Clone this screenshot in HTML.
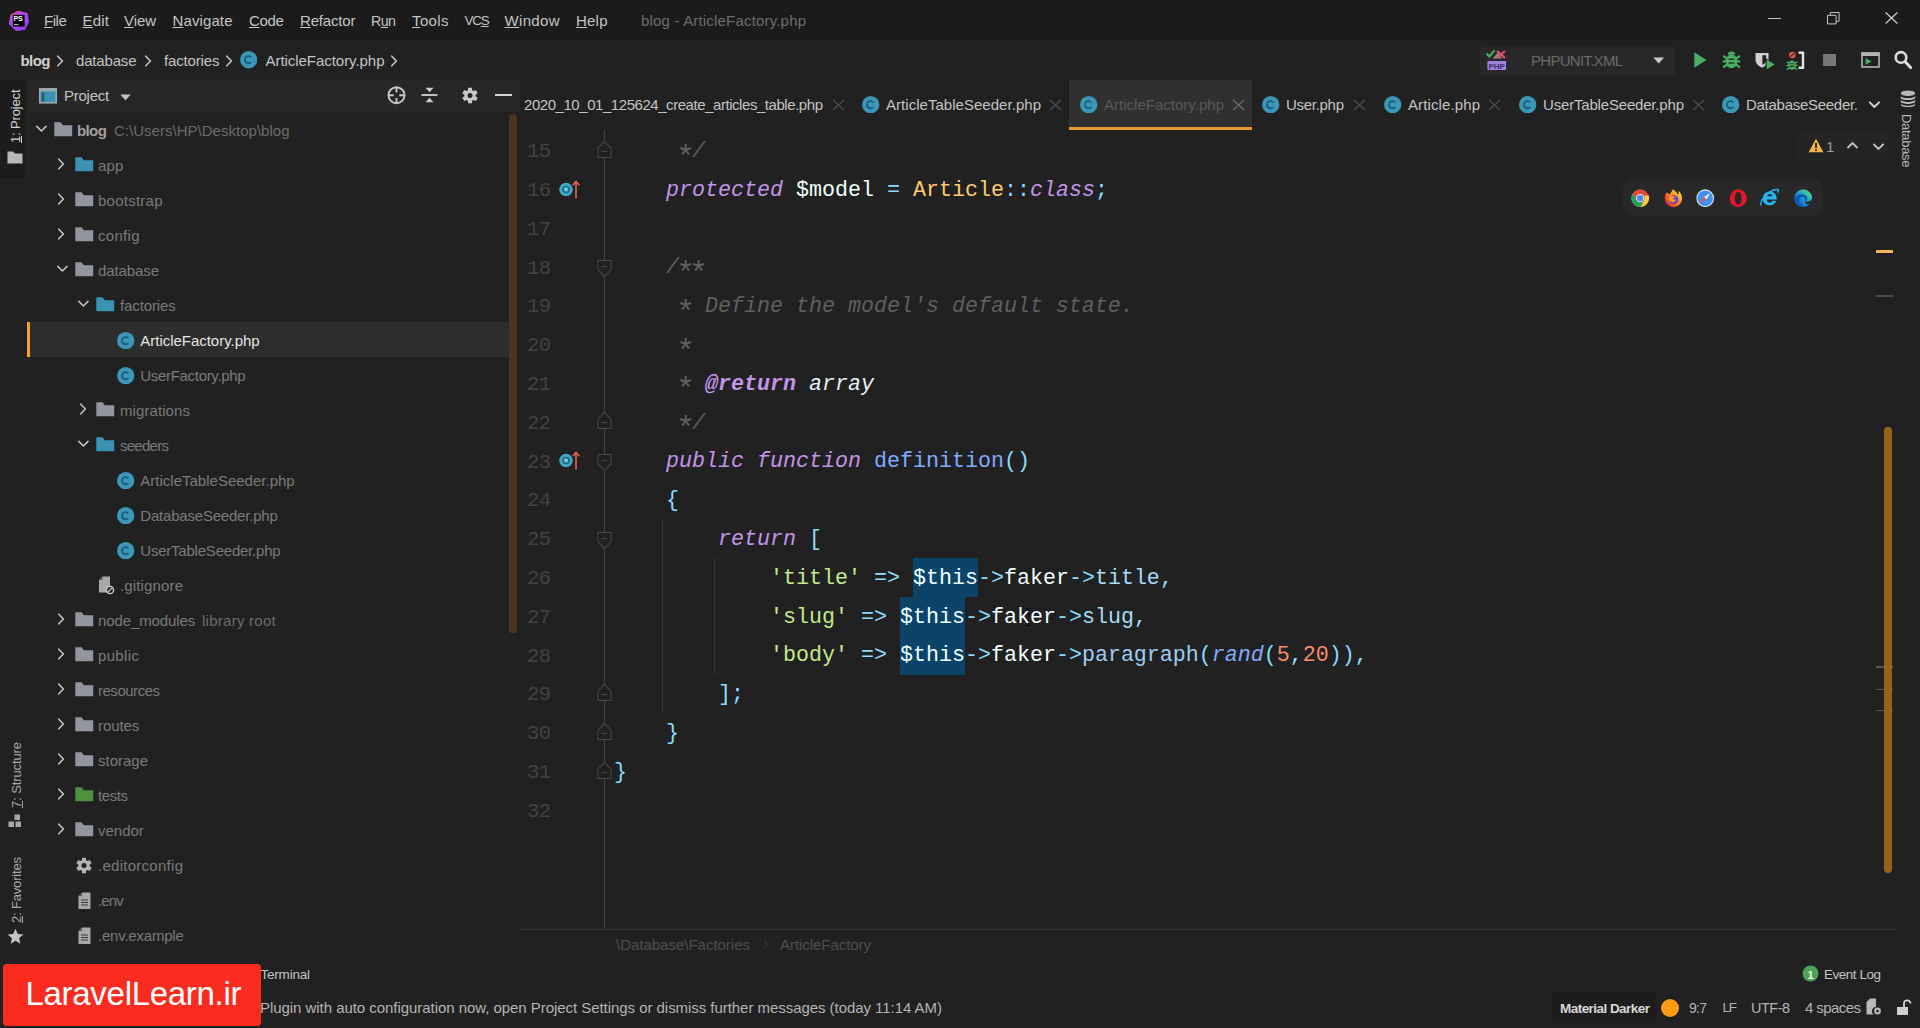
<!DOCTYPE html>
<html lang="en"><head><meta charset="utf-8"><title>blog - ArticleFactory.php</title>
<style>
html,body{margin:0;padding:0;background:#212121;}
body{width:1920px;height:1028px;overflow:hidden;position:relative;font-family:"Liberation Sans", sans-serif;}
.t{position:absolute;white-space:pre;line-height:20px;height:20px;}
.r{position:absolute;display:block;}
.m{font-family:"Liberation Mono", monospace;}
.a{display:inline-block;width:13px;font-size:32px;line-height:0;position:relative;top:9.6px;left:-3.1px;font-style:normal;}
u{text-decoration:underline;text-underline-offset:1.2px;text-decoration-thickness:1.4px;}
</style></head>
<body>
<div class="r" style="left:0.00px;top:0.00px;width:1920.00px;height:40.00px;background:#1b1b1b;"></div>
<svg class="r" style="left:7.50px;top:10.00px;" width="22" height="22" viewBox="0 0 22 22">
<defs><linearGradient id="lg1" x1="0.2" y1="0" x2="0.8" y2="1"><stop offset="0" stop-color="#e8408c"/><stop offset="0.3" stop-color="#b84af0"/><stop offset="1" stop-color="#8a3df2"/></linearGradient></defs>
<path d="M2.500 4.500L10 0.800L19.500 3L21 12L17 20L8 21L0.800 14Z" fill="url(#lg1)"/>
<rect x="4.800" y="4.800" width="11.800" height="11.800" fill="#060606"/>
<text x="5.400" y="11.400" font-family="Liberation Sans, sans-serif" font-weight="700" font-size="7.200" fill="#ffffff" textLength="9.400" lengthAdjust="spacingAndGlyphs">PS</text>
<rect x="6" y="14.200" width="4.600" height="0.900" fill="#d8d8d8"/>
</svg>
<span class="t" style="left:44.00px;top:10.50px;font-size:15.00px;color:#c4c4c4;letter-spacing:-0.462px;"><u>F</u>ile</span>
<span class="t" style="left:82.50px;top:10.50px;font-size:15.00px;color:#c4c4c4;letter-spacing:0.214px;"><u>E</u>dit</span>
<span class="t" style="left:124.00px;top:10.50px;font-size:15.00px;color:#c4c4c4;letter-spacing:-0.083px;"><u>V</u>iew</span>
<span class="t" style="left:172.50px;top:10.50px;font-size:15.00px;color:#c4c4c4;letter-spacing:0.112px;"><u>N</u>avigate</span>
<span class="t" style="left:249.00px;top:10.50px;font-size:15.00px;color:#c4c4c4;letter-spacing:-0.358px;"><u>C</u>ode</span>
<span class="t" style="left:300.00px;top:10.50px;font-size:15.00px;color:#c4c4c4;letter-spacing:-0.172px;"><u>R</u>efactor</span>
<span class="t" style="left:371.00px;top:10.78px;font-size:14.20px;color:#c4c4c4;letter-spacing:-0.516px;">R<u>u</u>n</span>
<span class="t" style="left:412.00px;top:10.50px;font-size:15.00px;color:#c4c4c4;letter-spacing:0.367px;"><u>T</u>ools</span>
<span class="t" style="left:464.50px;top:11.06px;font-size:13.40px;color:#c4c4c4;letter-spacing:-1.123px;">VC<u>S</u></span>
<span class="t" style="left:504.50px;top:10.50px;font-size:15.00px;color:#c4c4c4;letter-spacing:0.325px;"><u>W</u>indow</span>
<span class="t" style="left:576.00px;top:10.50px;font-size:15.00px;color:#c4c4c4;letter-spacing:0.208px;"><u>H</u>elp</span>
<span class="t" style="left:641.00px;top:10.50px;font-size:15.00px;color:#6c6c6c;letter-spacing:0.182px;">blog - ArticleFactory.php</span>
<div class="r" style="left:1768.00px;top:18.20px;width:13.00px;height:1.20px;background:#c4c4c4;"></div>
<svg class="r" style="left:1826.50px;top:11.50px;" width="13" height="13" viewBox="0 0 13 13"><path d="M0.5 3.300h8.600v8.600h-8.600z M3.300 3.300v-2.800h8.800v8.800h-3" fill="none" stroke="#c4c4c4" stroke-width="1"/></svg>
<svg class="r" style="left:1884.50px;top:12.00px;" width="13" height="12" viewBox="0 0 13 12"><path d="M0.600 0.500L12.400 11.500M12.400 0.500L0.600 11.500" fill="none" stroke="#d0d0d0" stroke-width="1.200"/></svg>
<span class="t" style="left:20.50px;top:50.60px;font-size:15.00px;color:#d0d0d0;letter-spacing:-0.552px;font-weight:700;">blog</span>
<svg class="r" style="left:56.00px;top:53.80px;" width="9" height="14" viewBox="0 0 9 14"><path d="M1.8 2.2L6.4 7L1.8 11.8" fill="none" stroke="#c4c4c4" stroke-width="1.6" stroke-linecap="round" stroke-linejoin="round"/></svg>
<span class="t" style="left:76.00px;top:50.60px;font-size:15.00px;color:#c4c4c4;letter-spacing:-0.176px;">database</span>
<svg class="r" style="left:143.50px;top:53.80px;" width="9" height="14" viewBox="0 0 9 14"><path d="M1.8 2.2L6.4 7L1.8 11.8" fill="none" stroke="#c4c4c4" stroke-width="1.6" stroke-linecap="round" stroke-linejoin="round"/></svg>
<span class="t" style="left:164.00px;top:50.60px;font-size:15.00px;color:#c4c4c4;letter-spacing:-0.150px;">factories</span>
<svg class="r" style="left:225.00px;top:53.80px;" width="9" height="14" viewBox="0 0 9 14"><path d="M1.8 2.2L6.4 7L1.8 11.8" fill="none" stroke="#c4c4c4" stroke-width="1.6" stroke-linecap="round" stroke-linejoin="round"/></svg>
<svg class="r" style="left:239.80px;top:51.30px;" width="17.4" height="17.4" viewBox="0 0 17.4 17.4"><circle cx="8.7" cy="8.7" r="8.7" fill="#3b97b8"/><path d="M11.3 6.4 a3.6 3.6 0 1 0 0 4.6" fill="none" stroke="#1f5c78" stroke-width="1.900"/></svg>
<span class="t" style="left:265.50px;top:50.60px;font-size:15.00px;color:#c4c4c4;letter-spacing:-0.045px;">ArticleFactory.php</span>
<svg class="r" style="left:390.00px;top:53.80px;" width="9" height="14" viewBox="0 0 9 14"><path d="M1.8 2.2L6.4 7L1.8 11.8" fill="none" stroke="#c4c4c4" stroke-width="1.6" stroke-linecap="round" stroke-linejoin="round"/></svg>
<div class="r" style="left:1480.00px;top:47.00px;width:195.00px;height:28.00px;background:#282828;border-radius:2px;"></div>
<svg class="r" style="left:1485.00px;top:49.00px;" width="23" height="22" viewBox="0 0 23 22">
<path d="M7.5 9.5L13 3.5L17 9.5z" fill="#8a8a92"/>
<path d="M1.6 4.6l2.8 2.8l5-6" fill="none" stroke="#4bae61" stroke-width="2.2"/>
<path d="M12 2l8 7M20 2l-8 7" fill="none" stroke="#e0506e" stroke-width="2.2"/>
<rect x="2.4" y="12" width="18.6" height="9" rx="1" fill="#9f83dc"/>
<text x="3.4" y="19.7" font-family="Liberation Sans, sans-serif" font-weight="700" font-size="8" fill="#3a2a78">PHP</text>
</svg>
<span class="t" style="left:1531.00px;top:50.60px;font-size:15.00px;color:#6a6a6a;letter-spacing:-0.719px;">PHPUNIT.XML</span>
<svg class="r" style="left:1653.00px;top:57.00px;" width="12" height="8" viewBox="0 0 12 8"><path d="M0.3 0.4h10.8L5.7 6.6z" fill="#c8c8c8"/></svg>
<svg class="r" style="left:1694.00px;top:51.50px;" width="13" height="16" viewBox="0 0 13 16"><path d="M0.3 0.2L12.5 8L0.3 15.8z" fill="#4bae61"/></svg>
<svg class="r" style="left:1721.50px;top:50.00px;" width="19" height="19" viewBox="0 0 19 19">
<g fill="#4bae61" stroke="#4bae61">
<ellipse cx="9.5" cy="11.2" rx="5.7" ry="7" stroke="none"/>
<path d="M5.6 4.4a4 3.6 0 0 1 7.8 0z" stroke="none"/>
<path d="M1.2 6l4 2.6M17.8 6l-4 2.6M0.8 11.4h4.4M18.2 11.4h-4.4M1.2 17.4l4-3M17.8 17.4l-4-3" stroke-width="2.2" fill="none"/>
</g>
<path d="M6.6 9.3h5.8M6.6 13h5.8" stroke="#1f3a26" stroke-width="1.5"/>
</svg>
<svg class="r" style="left:1754.50px;top:52.00px;" width="21" height="19" viewBox="0 0 21 19">
<path d="M0.5 1h13v6.5c0 4-3 6.6-6.5 8.2C3.5 14.100 0.5 11.500 0.5 7.500z" fill="#cfcfcf"/>
<path d="M7.4 3.2h3.800v4.800c0 2.300-1.600 3.800-3.800 4.900z" fill="#212121"/>
<path d="M10.500 6L20 12L10.500 18z" fill="#212121"/>
<path d="M11.600 7.600L19.600 12.400L11.600 17.400z" fill="#4bae61"/>
</svg>
<svg class="r" style="left:1785.50px;top:51.00px;" width="19" height="20" viewBox="0 0 19 20">
<circle cx="6.300" cy="4" r="3.300" fill="#e05252"/>
<path d="M4.300 5.600l4-3.200" stroke="#212121" stroke-width="1.100"/>
<ellipse cx="6" cy="14.200" rx="3.600" ry="4.600" fill="#4bae61"/>
<path d="M0.800 10.800l3 1.800M11.200 10.800l-3 1.800M0.500 14.400h3M11.500 14.400h-3M0.800 18.600l3-2M11.200 18.600l-3-2" stroke="#4bae61" stroke-width="1.500"/>
<path d="M3.600 12.800h4.800M3.600 15.400h4.800" stroke="#1f3a26" stroke-width="1.100"/>
<path d="M12.600 1.800h4.400v15h-4.400" fill="none" stroke="#e4e4e4" stroke-width="2.400"/>
</svg>
<div class="r" style="left:1822.70px;top:54.00px;width:13.00px;height:12.40px;background:#777777;"></div>
<svg class="r" style="left:1860.50px;top:52.00px;" width="19" height="16" viewBox="0 0 19 16"><rect x="1" y="1" width="17" height="14" fill="none" stroke="#b4b4b4" stroke-width="1.600"/><rect x="0.400" y="0.400" width="18.200" height="3.600" fill="#b4b4b4"/><path d="M4.600 6l6 3.400l-6 3.400z" fill="#4bae61"/></svg>
<svg class="r" style="left:1893.00px;top:49.50px;" width="20" height="20" viewBox="0 0 20 20"><circle cx="8" cy="7.400" r="5.300" fill="none" stroke="#dcdcdc" stroke-width="2.600"/><path d="M12 11.600L17.600 17.600" stroke="#dcdcdc" stroke-width="3" stroke-linecap="round"/></svg>
<div class="r" style="left:0.00px;top:80.00px;width:25.00px;height:98.00px;background:#1c1c1c;"></div>
<span class="t v" style="left:6.30px;top:143.20px;font-size:13.00px;color:#d0d0d0;letter-spacing:-0.158px;transform-origin:0 0;transform:rotate(-90deg);"><u>1</u>: Project</span>
<svg class="r" style="left:6.50px;top:151.00px;" width="16" height="13" viewBox="0 0 16 13"><path d="M0.5 0.5h5.5l2 2h7.5v10h-15z" fill="#b8b8b8"/></svg>
<span class="t v" style="left:6.60px;top:808.00px;font-size:13.00px;color:#a8a8a8;letter-spacing:-0.109px;transform-origin:0 0;transform:rotate(-90deg);"><u>7</u>: Structure</span>
<svg class="r" style="left:8.00px;top:814.00px;" width="14" height="14" viewBox="0 0 14 14"><rect x="6.5" y="0.5" width="5.5" height="5.5" fill="#a8a8a8"/><rect x="0.5" y="7.5" width="5.5" height="5.5" fill="#a8a8a8"/><rect x="7.5" y="7.5" width="5.5" height="5.5" fill="#a8a8a8"/></svg>
<span class="t v" style="left:6.60px;top:923.00px;font-size:13.00px;color:#a8a8a8;letter-spacing:-0.175px;transform-origin:0 0;transform:rotate(-90deg);"><u>2</u>: Favorites</span>
<svg class="r" style="left:6.50px;top:928.00px;" width="17" height="16" viewBox="0 0 17 16"><path d="M8.5 0.8l2.3 5.2l5.6 0.5l-4.3 3.7l1.3 5.5l-4.9-3l-4.9 3l1.3-5.5l-4.3-3.7l5.6-0.5z" fill="#c4c4c4"/></svg>
<div class="r" style="left:28.00px;top:80.00px;width:492.00px;height:32.00px;background:#272727;"></div>
<svg class="r" style="left:39.00px;top:87.50px;" width="18" height="17" viewBox="0 0 18 17"><rect x="0.8" y="0.8" width="16.4" height="14" fill="#3a93b5" stroke="#9aa7b0" stroke-width="1.6"/><rect x="0.8" y="0.8" width="16.4" height="2.6" fill="#9aa7b0"/><rect x="2.4" y="4.5" width="3" height="9" fill="#2b5f78"/></svg>
<span class="t" style="left:64.00px;top:85.80px;font-size:15.00px;color:#c4c4c4;letter-spacing:-0.248px;">Project</span>
<svg class="r" style="left:120.00px;top:93.50px;" width="11" height="7" viewBox="0 0 11 7"><path d="M0.3 0.5h10.4L5.5 6.2z" fill="#c4c4c4"/></svg>
<svg class="r" style="left:386.50px;top:86.00px;" width="19" height="19" viewBox="0 0 19 19"><circle cx="9.5" cy="9.2" r="8" fill="none" stroke="#c8c8c8" stroke-width="1.9"/><path d="M9.5 1.2v5.200M9.500 12v5.200M1.500 9.200h5.200M12.300 9.200h5.200" stroke="#c8c8c8" stroke-width="1.900"/></svg>
<svg class="r" style="left:420.50px;top:86.00px;" width="17" height="18" viewBox="0 0 17 18"><path d="M0.500 9h16" stroke="#c8c8c8" stroke-width="1.900"/><path d="M4.500 1.800h8l-4 4.400z M4.500 16.200h8l-4-4.400z" fill="#c8c8c8"/></svg>
<svg class="r" style="left:462.00px;top:86.50px;" width="16" height="17" viewBox="0 0 16 17"><path d="M5.93 3.19L6.08 0.73L9.92 0.73L10.07 3.19L11.56 4.05L13.77 2.95L15.69 6.28L13.63 7.64L13.63 9.36L15.69 10.72L13.77 14.05L11.56 12.95L10.07 13.81L9.92 16.27L6.08 16.27L5.93 13.81L4.44 12.95L2.23 14.05L0.31 10.72L2.37 9.36L2.37 7.64L0.31 6.28L2.23 2.95L4.44 4.05Z" fill="#c8c8c8"/><circle cx="8" cy="8.500" r="2.500" fill="#272727"/></svg>
<div class="r" style="left:495.30px;top:94.00px;width:16.40px;height:2.00px;background:#d4d4d4;"></div>
<div class="r" style="left:27.00px;top:321.50px;width:483.00px;height:35.50px;background:#2d2d2d;"></div>
<div class="r" style="left:27.00px;top:321.50px;width:3.40px;height:35.50px;background:#f9a21a;"></div>
<svg class="r" style="left:34.70px;top:124.20px;" width="13" height="10" viewBox="0 0 13 10"><path d="M1.8 2.4L6.4 7L11 2.4" fill="none" stroke="#c4c4c4" stroke-width="1.6" stroke-linecap="round" stroke-linejoin="round"/></svg>
<svg class="r" style="left:54.20px;top:122.10px;" width="18.5" height="14.5" viewBox="0 0 18.5 14.5"><path d="M0.3 0.3h6.2l2.4 2.9h9.3v11h-17.9z" fill="#93969f"/></svg>
<span class="t" style="left:77.00px;top:120.60px;font-size:15.00px;color:#a0a0a0;letter-spacing:-0.619px;font-weight:700;">blog</span>
<span class="t" style="left:114.00px;top:120.60px;font-size:15.00px;color:#6a6a6a;letter-spacing:0.018px;">C:\Users\HP\Desktop\blog</span>
<svg class="r" style="left:57.10px;top:157.30px;" width="9" height="14" viewBox="0 0 9 14"><path d="M1.8 2.2L6.4 7L1.8 11.8" fill="none" stroke="#c4c4c4" stroke-width="1.6" stroke-linecap="round" stroke-linejoin="round"/></svg>
<svg class="r" style="left:75.10px;top:157.10px;" width="18.5" height="14.5" viewBox="0 0 18.5 14.5"><path d="M0.3 0.3h6.2l2.4 2.9h9.3v11h-17.9z" fill="#3a93b5"/></svg>
<span class="t" style="left:98.00px;top:155.60px;font-size:15.00px;color:#7a7a7a;letter-spacing:0.184px;">app</span>
<svg class="r" style="left:57.10px;top:192.30px;" width="9" height="14" viewBox="0 0 9 14"><path d="M1.8 2.2L6.4 7L1.8 11.8" fill="none" stroke="#c4c4c4" stroke-width="1.6" stroke-linecap="round" stroke-linejoin="round"/></svg>
<svg class="r" style="left:75.10px;top:192.10px;" width="18.5" height="14.5" viewBox="0 0 18.5 14.5"><path d="M0.3 0.3h6.2l2.4 2.9h9.3v11h-17.9z" fill="#93969f"/></svg>
<span class="t" style="left:98.00px;top:190.60px;font-size:15.00px;color:#7a7a7a;letter-spacing:0.244px;">bootstrap</span>
<svg class="r" style="left:57.10px;top:227.30px;" width="9" height="14" viewBox="0 0 9 14"><path d="M1.8 2.2L6.4 7L1.8 11.8" fill="none" stroke="#c4c4c4" stroke-width="1.6" stroke-linecap="round" stroke-linejoin="round"/></svg>
<svg class="r" style="left:75.10px;top:227.10px;" width="18.5" height="14.5" viewBox="0 0 18.5 14.5"><path d="M0.3 0.3h6.2l2.4 2.9h9.3v11h-17.9z" fill="#93969f"/></svg>
<span class="t" style="left:98.00px;top:225.60px;font-size:15.00px;color:#7a7a7a;letter-spacing:0.294px;">config</span>
<svg class="r" style="left:55.50px;top:264.20px;" width="13" height="10" viewBox="0 0 13 10"><path d="M1.8 2.4L6.4 7L11 2.4" fill="none" stroke="#c4c4c4" stroke-width="1.6" stroke-linecap="round" stroke-linejoin="round"/></svg>
<svg class="r" style="left:75.10px;top:262.10px;" width="18.5" height="14.5" viewBox="0 0 18.5 14.5"><path d="M0.3 0.3h6.2l2.4 2.9h9.3v11h-17.9z" fill="#93969f"/></svg>
<span class="t" style="left:98.00px;top:260.60px;font-size:15.00px;color:#7a7a7a;letter-spacing:-0.105px;">database</span>
<svg class="r" style="left:76.60px;top:299.20px;" width="13" height="10" viewBox="0 0 13 10"><path d="M1.8 2.4L6.4 7L11 2.4" fill="none" stroke="#c4c4c4" stroke-width="1.6" stroke-linecap="round" stroke-linejoin="round"/></svg>
<svg class="r" style="left:96.00px;top:297.10px;" width="18.5" height="14.5" viewBox="0 0 18.5 14.5"><path d="M0.3 0.3h6.2l2.4 2.9h9.3v11h-17.9z" fill="#3a93b5"/></svg>
<span class="t" style="left:120.00px;top:295.60px;font-size:15.00px;color:#7a7a7a;letter-spacing:-0.125px;">factories</span>
<svg class="r" style="left:117.30px;top:331.50px;" width="17.4" height="17.4" viewBox="0 0 17.4 17.4"><circle cx="8.7" cy="8.7" r="8.7" fill="#3b97b8"/><path d="M11.3 6.4 a3.6 3.6 0 1 0 0 4.6" fill="none" stroke="#1f5c78" stroke-width="1.900"/></svg>
<span class="t" style="left:140.30px;top:330.60px;font-size:15.00px;color:#e4e4e4;letter-spacing:-0.027px;">ArticleFactory.php</span>
<svg class="r" style="left:117.30px;top:366.50px;" width="17.4" height="17.4" viewBox="0 0 17.4 17.4"><circle cx="8.7" cy="8.7" r="8.7" fill="#3b97b8"/><path d="M11.3 6.4 a3.6 3.6 0 1 0 0 4.6" fill="none" stroke="#1f5c78" stroke-width="1.900"/></svg>
<span class="t" style="left:140.30px;top:365.60px;font-size:15.00px;color:#7a7a7a;letter-spacing:-0.312px;">UserFactory.php</span>
<svg class="r" style="left:78.50px;top:402.30px;" width="9" height="14" viewBox="0 0 9 14"><path d="M1.8 2.2L6.4 7L1.8 11.8" fill="none" stroke="#c4c4c4" stroke-width="1.6" stroke-linecap="round" stroke-linejoin="round"/></svg>
<svg class="r" style="left:96.00px;top:402.10px;" width="18.5" height="14.5" viewBox="0 0 18.5 14.5"><path d="M0.3 0.3h6.2l2.4 2.9h9.3v11h-17.9z" fill="#93969f"/></svg>
<span class="t" style="left:120.00px;top:400.60px;font-size:15.00px;color:#7a7a7a;letter-spacing:0.077px;">migrations</span>
<svg class="r" style="left:76.60px;top:439.20px;" width="13" height="10" viewBox="0 0 13 10"><path d="M1.8 2.4L6.4 7L11 2.4" fill="none" stroke="#c4c4c4" stroke-width="1.6" stroke-linecap="round" stroke-linejoin="round"/></svg>
<svg class="r" style="left:96.00px;top:437.10px;" width="18.5" height="14.5" viewBox="0 0 18.5 14.5"><path d="M0.3 0.3h6.2l2.4 2.9h9.3v11h-17.9z" fill="#3a93b5"/></svg>
<span class="t" style="left:120.00px;top:435.60px;font-size:15.00px;color:#7a7a7a;letter-spacing:-0.746px;">seeders</span>
<svg class="r" style="left:117.30px;top:471.50px;" width="17.4" height="17.4" viewBox="0 0 17.4 17.4"><circle cx="8.7" cy="8.7" r="8.7" fill="#3b97b8"/><path d="M11.3 6.4 a3.6 3.6 0 1 0 0 4.6" fill="none" stroke="#1f5c78" stroke-width="1.900"/></svg>
<span class="t" style="left:140.30px;top:470.60px;font-size:15.00px;color:#7a7a7a;letter-spacing:0.006px;">ArticleTableSeeder.php</span>
<svg class="r" style="left:117.30px;top:506.50px;" width="17.4" height="17.4" viewBox="0 0 17.4 17.4"><circle cx="8.7" cy="8.7" r="8.7" fill="#3b97b8"/><path d="M11.3 6.4 a3.6 3.6 0 1 0 0 4.6" fill="none" stroke="#1f5c78" stroke-width="1.900"/></svg>
<span class="t" style="left:140.30px;top:505.60px;font-size:15.00px;color:#7a7a7a;letter-spacing:-0.203px;">DatabaseSeeder.php</span>
<svg class="r" style="left:117.30px;top:541.50px;" width="17.4" height="17.4" viewBox="0 0 17.4 17.4"><circle cx="8.7" cy="8.7" r="8.7" fill="#3b97b8"/><path d="M11.3 6.4 a3.6 3.6 0 1 0 0 4.6" fill="none" stroke="#1f5c78" stroke-width="1.900"/></svg>
<span class="t" style="left:140.30px;top:540.60px;font-size:15.00px;color:#7a7a7a;letter-spacing:-0.220px;">UserTableSeeder.php</span>
<svg class="r" style="left:98.00px;top:576.00px;" width="17" height="19" viewBox="0 0 17 19"><path d="M4.5 0.5h7.5v10a4.5 4.5 0 0 0 -3 6h-8v-12.5z" fill="#a8a8a8"/><path d="M1 4l3.5-3.5v3.5z" fill="#5a5a5a"/><circle cx="12" cy="14" r="3.6" fill="none" stroke="#d0d0d0" stroke-width="1.3"/><path d="M9.6 16.4l4.8-4.8" stroke="#d0d0d0" stroke-width="1.3"/></svg>
<span class="t" style="left:120.00px;top:575.60px;font-size:15.00px;color:#7a7a7a;letter-spacing:0.142px;">.gitignore</span>
<svg class="r" style="left:57.10px;top:612.30px;" width="9" height="14" viewBox="0 0 9 14"><path d="M1.8 2.2L6.4 7L1.8 11.8" fill="none" stroke="#c4c4c4" stroke-width="1.6" stroke-linecap="round" stroke-linejoin="round"/></svg>
<svg class="r" style="left:75.10px;top:612.10px;" width="18.5" height="14.5" viewBox="0 0 18.5 14.5"><path d="M0.3 0.3h6.2l2.4 2.9h9.3v11h-17.9z" fill="#93969f"/></svg>
<span class="t" style="left:98.00px;top:610.60px;font-size:15.00px;color:#7a7a7a;letter-spacing:-0.102px;">node_modules</span>
<span class="t" style="left:202.00px;top:610.60px;font-size:15.00px;color:#6a6a6a;letter-spacing:0.258px;">library root</span>
<svg class="r" style="left:57.10px;top:647.30px;" width="9" height="14" viewBox="0 0 9 14"><path d="M1.8 2.2L6.4 7L1.8 11.8" fill="none" stroke="#c4c4c4" stroke-width="1.6" stroke-linecap="round" stroke-linejoin="round"/></svg>
<svg class="r" style="left:75.10px;top:647.10px;" width="18.5" height="14.5" viewBox="0 0 18.5 14.5"><path d="M0.3 0.3h6.2l2.4 2.9h9.3v11h-17.9z" fill="#93969f"/></svg>
<span class="t" style="left:98.00px;top:645.60px;font-size:15.00px;color:#7a7a7a;letter-spacing:0.339px;">public</span>
<svg class="r" style="left:57.10px;top:682.30px;" width="9" height="14" viewBox="0 0 9 14"><path d="M1.8 2.2L6.4 7L1.8 11.8" fill="none" stroke="#c4c4c4" stroke-width="1.6" stroke-linecap="round" stroke-linejoin="round"/></svg>
<svg class="r" style="left:75.10px;top:682.10px;" width="18.5" height="14.5" viewBox="0 0 18.5 14.5"><path d="M0.3 0.3h6.2l2.4 2.9h9.3v11h-17.9z" fill="#93969f"/></svg>
<span class="t" style="left:98.00px;top:680.60px;font-size:15.00px;color:#7a7a7a;letter-spacing:-0.482px;">resources</span>
<svg class="r" style="left:57.10px;top:717.30px;" width="9" height="14" viewBox="0 0 9 14"><path d="M1.8 2.2L6.4 7L1.8 11.8" fill="none" stroke="#c4c4c4" stroke-width="1.6" stroke-linecap="round" stroke-linejoin="round"/></svg>
<svg class="r" style="left:75.10px;top:717.10px;" width="18.5" height="14.5" viewBox="0 0 18.5 14.5"><path d="M0.3 0.3h6.2l2.4 2.9h9.3v11h-17.9z" fill="#93969f"/></svg>
<span class="t" style="left:98.00px;top:715.60px;font-size:15.00px;color:#7a7a7a;letter-spacing:-0.101px;">routes</span>
<svg class="r" style="left:57.10px;top:752.30px;" width="9" height="14" viewBox="0 0 9 14"><path d="M1.8 2.2L6.4 7L1.8 11.8" fill="none" stroke="#c4c4c4" stroke-width="1.6" stroke-linecap="round" stroke-linejoin="round"/></svg>
<svg class="r" style="left:75.10px;top:752.10px;" width="18.5" height="14.5" viewBox="0 0 18.5 14.5"><path d="M0.3 0.3h6.2l2.4 2.9h9.3v11h-17.9z" fill="#93969f"/></svg>
<span class="t" style="left:98.00px;top:750.60px;font-size:15.00px;color:#7a7a7a;letter-spacing:-0.008px;">storage</span>
<svg class="r" style="left:57.10px;top:787.30px;" width="9" height="14" viewBox="0 0 9 14"><path d="M1.8 2.2L6.4 7L1.8 11.8" fill="none" stroke="#c4c4c4" stroke-width="1.6" stroke-linecap="round" stroke-linejoin="round"/></svg>
<svg class="r" style="left:75.10px;top:787.10px;" width="18.5" height="14.5" viewBox="0 0 18.5 14.5"><path d="M0.3 0.3h6.2l2.4 2.9h9.3v11h-17.9z" fill="#4c9040"/></svg>
<span class="t" style="left:98.00px;top:785.60px;font-size:15.00px;color:#7a7a7a;letter-spacing:-0.422px;">tests</span>
<svg class="r" style="left:57.10px;top:822.30px;" width="9" height="14" viewBox="0 0 9 14"><path d="M1.8 2.2L6.4 7L1.8 11.8" fill="none" stroke="#c4c4c4" stroke-width="1.6" stroke-linecap="round" stroke-linejoin="round"/></svg>
<svg class="r" style="left:75.10px;top:822.10px;" width="18.5" height="14.5" viewBox="0 0 18.5 14.5"><path d="M0.3 0.3h6.2l2.4 2.9h9.3v11h-17.9z" fill="#93969f"/></svg>
<span class="t" style="left:98.00px;top:820.60px;font-size:15.00px;color:#7a7a7a;letter-spacing:-0.015px;">vendor</span>
<svg class="r" style="left:76.30px;top:856.50px;" width="16" height="17" viewBox="0 0 16 17"><path d="M5.93 3.19L6.08 0.73L9.92 0.73L10.07 3.19L11.56 4.05L13.77 2.95L15.69 6.28L13.63 7.64L13.63 9.36L15.69 10.72L13.77 14.05L11.56 12.95L10.07 13.81L9.92 16.27L6.08 16.27L5.93 13.81L4.44 12.95L2.23 14.05L0.31 10.72L2.37 9.36L2.37 7.64L0.31 6.28L2.23 2.95L4.44 4.05Z" fill="#b4b4b4"/><circle cx="8" cy="8.500" r="2.500" fill="#212121"/></svg>
<span class="t" style="left:98.00px;top:855.60px;font-size:15.00px;color:#7a7a7a;letter-spacing:0.273px;">.editorconfig</span>
<svg class="r" style="left:77.00px;top:891.50px;" width="15" height="18" viewBox="0 0 15 18"><path d="M5 0.5h8.5v16.5h-12v-13z" fill="#a8a8a8"/><path d="M1.5 4l3.5-3.5v3.5z" fill="#5a5a5a"/><path d="M4 8h7M4 10.5h7M4 13h7" stroke="#3a3a3a" stroke-width="1.1"/></svg>
<span class="t" style="left:98.00px;top:890.60px;font-size:15.00px;color:#7a7a7a;letter-spacing:-0.853px;">.env</span>
<svg class="r" style="left:77.00px;top:926.50px;" width="15" height="18" viewBox="0 0 15 18"><path d="M5 0.5h8.5v16.5h-12v-13z" fill="#a8a8a8"/><path d="M1.5 4l3.5-3.5v3.5z" fill="#5a5a5a"/><path d="M4 8h7M4 10.5h7M4 13h7" stroke="#3a3a3a" stroke-width="1.1"/></svg>
<span class="t" style="left:98.00px;top:925.60px;font-size:15.00px;color:#7a7a7a;letter-spacing:-0.210px;">.env.example</span>
<div class="r" style="left:508.50px;top:113.50px;width:8.00px;height:519.00px;background:#4a3520;border-radius:3px;"></div>
<div class="r" style="left:1068.50px;top:79.50px;width:183.50px;height:48.00px;background:#303030;"></div>
<div class="r" style="left:1068.50px;top:126.80px;width:183.50px;height:3.50px;background:#e8962e;"></div>
<span class="t" style="left:524.00px;top:94.80px;font-size:15.00px;color:#c4c4c4;letter-spacing:-0.447px;">2020_10_01_125624_create_articles_table.php</span>
<svg class="r" style="left:831.50px;top:98.50px;" width="13" height="12" viewBox="0 0 13 12"><path d="M1 1L12 11M12 1L1 11" stroke="#4c4c4c" stroke-width="1.3" fill="none"/></svg>
<svg class="r" style="left:862.30px;top:95.80px;" width="17.4" height="17.4" viewBox="0 0 17.4 17.4"><circle cx="8.7" cy="8.7" r="8.7" fill="#3b97b8"/><path d="M11.3 6.4 a3.6 3.6 0 1 0 0 4.6" fill="none" stroke="#1f5c78" stroke-width="1.900"/></svg>
<span class="t" style="left:886.00px;top:94.80px;font-size:15.00px;color:#c4c4c4;letter-spacing:0.034px;">ArticleTableSeeder.php</span>
<svg class="r" style="left:1048.50px;top:98.50px;" width="13" height="12" viewBox="0 0 13 12"><path d="M1 1L12 11M12 1L1 11" stroke="#4c4c4c" stroke-width="1.3" fill="none"/></svg>
<svg class="r" style="left:1080.30px;top:95.80px;" width="17.4" height="17.4" viewBox="0 0 17.4 17.4"><circle cx="8.7" cy="8.7" r="8.7" fill="#3b97b8"/><path d="M11.3 6.4 a3.6 3.6 0 1 0 0 4.6" fill="none" stroke="#1f5c78" stroke-width="1.900"/></svg>
<span class="t" style="left:1104.00px;top:94.80px;font-size:15.00px;color:#585858;letter-spacing:0.014px;">ArticleFactory.php</span>
<svg class="r" style="left:1231.50px;top:98.50px;" width="13" height="12" viewBox="0 0 13 12"><path d="M1 1L12 11M12 1L1 11" stroke="#6c6c6c" stroke-width="1.3" fill="none"/></svg>
<svg class="r" style="left:1262.30px;top:95.80px;" width="17.4" height="17.4" viewBox="0 0 17.4 17.4"><circle cx="8.7" cy="8.7" r="8.7" fill="#3b97b8"/><path d="M11.3 6.4 a3.6 3.6 0 1 0 0 4.6" fill="none" stroke="#1f5c78" stroke-width="1.900"/></svg>
<span class="t" style="left:1286.00px;top:94.80px;font-size:15.00px;color:#c4c4c4;letter-spacing:-0.292px;">User.php</span>
<svg class="r" style="left:1352.50px;top:98.50px;" width="13" height="12" viewBox="0 0 13 12"><path d="M1 1L12 11M12 1L1 11" stroke="#4c4c4c" stroke-width="1.3" fill="none"/></svg>
<svg class="r" style="left:1384.30px;top:95.80px;" width="17.4" height="17.4" viewBox="0 0 17.4 17.4"><circle cx="8.7" cy="8.7" r="8.7" fill="#3b97b8"/><path d="M11.3 6.4 a3.6 3.6 0 1 0 0 4.6" fill="none" stroke="#1f5c78" stroke-width="1.900"/></svg>
<span class="t" style="left:1408.00px;top:94.80px;font-size:15.00px;color:#c4c4c4;letter-spacing:0.113px;">Article.php</span>
<svg class="r" style="left:1487.50px;top:98.50px;" width="13" height="12" viewBox="0 0 13 12"><path d="M1 1L12 11M12 1L1 11" stroke="#4c4c4c" stroke-width="1.3" fill="none"/></svg>
<svg class="r" style="left:1519.30px;top:95.80px;" width="17.4" height="17.4" viewBox="0 0 17.4 17.4"><circle cx="8.7" cy="8.7" r="8.7" fill="#3b97b8"/><path d="M11.3 6.4 a3.6 3.6 0 1 0 0 4.6" fill="none" stroke="#1f5c78" stroke-width="1.900"/></svg>
<span class="t" style="left:1543.00px;top:94.80px;font-size:15.00px;color:#c4c4c4;letter-spacing:-0.181px;">UserTableSeeder.php</span>
<svg class="r" style="left:1691.50px;top:98.50px;" width="13" height="12" viewBox="0 0 13 12"><path d="M1 1L12 11M12 1L1 11" stroke="#4c4c4c" stroke-width="1.3" fill="none"/></svg>
<svg class="r" style="left:1722.30px;top:95.80px;" width="17.4" height="17.4" viewBox="0 0 17.4 17.4"><circle cx="8.7" cy="8.7" r="8.7" fill="#3b97b8"/><path d="M11.3 6.4 a3.6 3.6 0 1 0 0 4.6" fill="none" stroke="#1f5c78" stroke-width="1.900"/></svg>
<span class="t" style="left:1746.00px;top:94.80px;font-size:15.00px;color:#c4c4c4;letter-spacing:-0.280px;">DatabaseSeeder.</span>
<svg class="r" style="left:1868.00px;top:99.50px;" width="13" height="10" viewBox="0 0 13 10"><path d="M1.8 2.4L6.4 7L11 2.4" fill="none" stroke="#d0d0d0" stroke-width="2" stroke-linecap="round" stroke-linejoin="round"/></svg>
<svg class="r" style="left:1900.00px;top:90.00px;" width="16" height="17" viewBox="0 0 16 17"><g fill="#b8b8b8"><ellipse cx="8" cy="3.2" rx="7.2" ry="2.8"/><path d="M0.8 5.4c0 3.6 14.4 3.6 14.4 0v2c0 3.6-14.4 3.6-14.4 0z M0.8 9.2c0 3.6 14.4 3.6 14.4 0v2c0 3.6-14.4 3.6-14.4 0z M0.8 13c0 3.6 14.4 3.6 14.4 0v1.4c0 3.6-14.4 3.6-14.4 0z"/></g></svg>
<span class="t v" style="left:1915.5px;top:113.5px;font-size:13px;color:#b8b8b8;letter-spacing:-0.308px;transform-origin:0 0;transform:rotate(90deg);">Database</span>
<div class="r" style="left:913.00px;top:558.00px;width:65.00px;height:39.30px;background:#0b4468;"></div>
<div class="r" style="left:900.00px;top:596.80px;width:65.00px;height:78.10px;background:#0b4468;"></div>
<div class="r" style="left:662.00px;top:520.70px;width:1.00px;height:191.00px;background:#383838;"></div>
<div class="r" style="left:714.00px;top:557.50px;width:1.00px;height:116.40px;background:#383838;"></div>
<div class="r" style="left:1027.70px;top:608.50px;width:1.20px;height:16.50px;background:#0c0c0c;"></div>
<div class="r" style="left:1025.70px;top:608.00px;width:5.20px;height:1.00px;background:#0c0c0c;"></div>
<div class="r" style="left:1025.70px;top:624.50px;width:5.20px;height:1.00px;background:#0c0c0c;"></div>
<div class="r" style="left:604.00px;top:130.00px;width:1.00px;height:798.00px;background:#444444;"></div>
<span class="t m" style="left:527.00px;top:142.21px;font-size:20.60px;color:#424242;letter-spacing:-0.6px;">15</span>
<span class="t m" style="left:527.00px;top:181.01px;font-size:20.60px;color:#424242;letter-spacing:-0.6px;">16</span>
<span class="t m" style="left:527.00px;top:219.81px;font-size:20.60px;color:#424242;letter-spacing:-0.6px;">17</span>
<span class="t m" style="left:527.00px;top:258.61px;font-size:20.60px;color:#424242;letter-spacing:-0.6px;">18</span>
<span class="t m" style="left:527.00px;top:297.41px;font-size:20.60px;color:#424242;letter-spacing:-0.6px;">19</span>
<span class="t m" style="left:527.00px;top:336.21px;font-size:20.60px;color:#424242;letter-spacing:-0.6px;">20</span>
<span class="t m" style="left:527.00px;top:375.01px;font-size:20.60px;color:#424242;letter-spacing:-0.6px;">21</span>
<span class="t m" style="left:527.00px;top:413.81px;font-size:20.60px;color:#424242;letter-spacing:-0.6px;">22</span>
<span class="t m" style="left:527.00px;top:452.61px;font-size:20.60px;color:#424242;letter-spacing:-0.6px;">23</span>
<span class="t m" style="left:527.00px;top:491.41px;font-size:20.60px;color:#424242;letter-spacing:-0.6px;">24</span>
<span class="t m" style="left:527.00px;top:530.21px;font-size:20.60px;color:#424242;letter-spacing:-0.6px;">25</span>
<span class="t m" style="left:527.00px;top:569.01px;font-size:20.60px;color:#424242;letter-spacing:-0.6px;">26</span>
<span class="t m" style="left:527.00px;top:607.81px;font-size:20.60px;color:#424242;letter-spacing:-0.6px;">27</span>
<span class="t m" style="left:527.00px;top:646.61px;font-size:20.60px;color:#424242;letter-spacing:-0.6px;">28</span>
<span class="t m" style="left:527.00px;top:685.41px;font-size:20.60px;color:#424242;letter-spacing:-0.6px;">29</span>
<span class="t m" style="left:527.00px;top:724.21px;font-size:20.60px;color:#424242;letter-spacing:-0.6px;">30</span>
<span class="t m" style="left:527.00px;top:763.01px;font-size:20.60px;color:#424242;letter-spacing:-0.6px;">31</span>
<span class="t m" style="left:527.00px;top:801.81px;font-size:20.60px;color:#424242;letter-spacing:-0.6px;">32</span>
<svg class="r" style="left:596.50px;top:140.70px;" width="15" height="18" viewBox="0 0 15 18"><path d="M1 16.5v-9.5l6.5-6.5l6.5 6.5v9.5z" fill="#212121" stroke="#464646" stroke-width="1.1"/><path d="M4.5 10.5h6" stroke="#464646" stroke-width="1.1"/></svg>
<svg class="r" style="left:596.50px;top:259.10px;" width="15" height="19" viewBox="0 0 15 19"><path d="M1 1.5v9.5l6.5 6.5l6.5-6.5v-9.5z" fill="#212121" stroke="#464646" stroke-width="1.1"/><path d="M4.5 7.5h6" stroke="#464646" stroke-width="1.1"/></svg>
<svg class="r" style="left:596.50px;top:412.30px;" width="15" height="18" viewBox="0 0 15 18"><path d="M1 16.5v-9.5l6.5-6.5l6.5 6.5v9.5z" fill="#212121" stroke="#464646" stroke-width="1.1"/><path d="M4.5 10.5h6" stroke="#464646" stroke-width="1.1"/></svg>
<svg class="r" style="left:596.50px;top:453.10px;" width="15" height="19" viewBox="0 0 15 19"><path d="M1 1.5v9.5l6.5 6.5l6.5-6.5v-9.5z" fill="#212121" stroke="#464646" stroke-width="1.1"/><path d="M4.5 7.5h6" stroke="#464646" stroke-width="1.1"/></svg>
<svg class="r" style="left:596.50px;top:530.70px;" width="15" height="19" viewBox="0 0 15 19"><path d="M1 1.5v9.5l6.5 6.5l6.5-6.5v-9.5z" fill="#212121" stroke="#464646" stroke-width="1.1"/><path d="M4.5 7.5h6" stroke="#464646" stroke-width="1.1"/></svg>
<svg class="r" style="left:596.50px;top:683.90px;" width="15" height="18" viewBox="0 0 15 18"><path d="M1 16.5v-9.5l6.5-6.5l6.5 6.5v9.5z" fill="#212121" stroke="#464646" stroke-width="1.1"/><path d="M4.5 10.5h6" stroke="#464646" stroke-width="1.1"/></svg>
<svg class="r" style="left:596.50px;top:722.70px;" width="15" height="18" viewBox="0 0 15 18"><path d="M1 16.5v-9.5l6.5-6.5l6.5 6.5v9.5z" fill="#212121" stroke="#464646" stroke-width="1.1"/><path d="M4.5 10.5h6" stroke="#464646" stroke-width="1.1"/></svg>
<svg class="r" style="left:596.50px;top:761.50px;" width="15" height="18" viewBox="0 0 15 18"><path d="M1 16.5v-9.5l6.5-6.5l6.5 6.5v9.5z" fill="#212121" stroke="#464646" stroke-width="1.1"/><path d="M4.5 10.5h6" stroke="#464646" stroke-width="1.1"/></svg>
<svg class="r" style="left:558.00px;top:178.50px;" width="24" height="20" viewBox="0 0 24 20"><circle cx="8" cy="10.5" r="6.8" fill="#3fa7c6"/><circle cx="8" cy="10.5" r="3" fill="#6fc3d8" stroke="#1d6a84" stroke-width="1.700"/><path d="M18 19.5v-16" stroke="#f0605c" stroke-width="1.6"/><path d="M14.6 6.2l3.4-3.8l3.4 3.8" fill="none" stroke="#f0605c" stroke-width="1.5"/></svg>
<svg class="r" style="left:558.00px;top:450.10px;" width="24" height="20" viewBox="0 0 24 20"><circle cx="8" cy="10.5" r="6.8" fill="#3fa7c6"/><circle cx="8" cy="10.5" r="3" fill="#6fc3d8" stroke="#1d6a84" stroke-width="1.700"/><path d="M18 19.5v-16" stroke="#f0605c" stroke-width="1.6"/><path d="M14.6 6.2l3.4-3.8l3.4 3.8" fill="none" stroke="#f0605c" stroke-width="1.5"/></svg>
<span class="t m" style="left:614.00px;top:141.93px;font-size:21.663px;"><span style="color:#5f5f5f;font-style:italic;">     <span class="a">*</span>/</span></span>
<span class="t m" style="left:614.00px;top:180.73px;font-size:21.663px;"><span style="color:#eeffff;">    </span><span style="color:#c394e8;font-style:italic;">protected</span><span style="color:#eeffff;"> $model</span><span style="color:#89ddff;"> = </span><span style="color:#ffcb6b;">Article</span><span style="color:#89ddff;">::</span><span style="color:#c394e8;font-style:italic;">class</span><span style="color:#89ddff;">;</span></span>
<span class="t m" style="left:614.00px;top:258.33px;font-size:21.663px;"><span style="color:#5f5f5f;font-style:italic;">    /<span class="a">*</span><span class="a">*</span></span></span>
<span class="t m" style="left:614.00px;top:297.13px;font-size:21.663px;"><span style="color:#5f5f5f;font-style:italic;">     <span class="a">*</span> Define the model's default state.</span></span>
<span class="t m" style="left:614.00px;top:335.93px;font-size:21.663px;"><span style="color:#5f5f5f;font-style:italic;">     <span class="a">*</span></span></span>
<span class="t m" style="left:614.00px;top:374.73px;font-size:21.663px;"><span style="color:#5f5f5f;font-style:italic;">     <span class="a">*</span> </span><span style="color:#c394e8;font-style:italic;font-weight:700;">@return</span><span style="color:#e6f0f6;font-style:italic;"> array</span></span>
<span class="t m" style="left:614.00px;top:413.53px;font-size:21.663px;"><span style="color:#5f5f5f;font-style:italic;">     <span class="a">*</span>/</span></span>
<span class="t m" style="left:614.00px;top:452.33px;font-size:21.663px;"><span style="color:#eeffff;">    </span><span style="color:#c394e8;font-style:italic;">public function</span><span style="color:#82aaff;"> definition</span><span style="color:#89ddff;">()</span></span>
<span class="t m" style="left:614.00px;top:491.13px;font-size:21.663px;"><span style="color:#89ddff;">    {</span></span>
<span class="t m" style="left:614.00px;top:529.93px;font-size:21.663px;"><span style="color:#eeffff;">        </span><span style="color:#c394e8;font-style:italic;">return</span><span style="color:#89ddff;"> [</span></span>
<span class="t m" style="left:614.00px;top:568.73px;font-size:21.663px;"><span style="color:#eeffff;">            </span><span style="color:#c3e88d;">'title'</span><span style="color:#89ddff;"> =&gt; </span><span style="color:#eeffff;">$this</span><span style="color:#89ddff;">-&gt;</span><span style="color:#eeffff;">faker</span><span style="color:#89ddff;">-&gt;</span><span style="color:#a6dcf5;">title</span><span style="color:#89ddff;">,</span></span>
<span class="t m" style="left:614.00px;top:607.53px;font-size:21.663px;"><span style="color:#eeffff;">            </span><span style="color:#c3e88d;">'slug'</span><span style="color:#89ddff;"> =&gt; </span><span style="color:#eeffff;">$this</span><span style="color:#89ddff;">-&gt;</span><span style="color:#eeffff;">faker</span><span style="color:#89ddff;">-&gt;</span><span style="color:#a6dcf5;">slug</span><span style="color:#89ddff;">,</span></span>
<span class="t m" style="left:614.00px;top:646.33px;font-size:21.663px;"><span style="color:#eeffff;">            </span><span style="color:#c3e88d;">'body'</span><span style="color:#89ddff;"> =&gt; </span><span style="color:#eeffff;">$this</span><span style="color:#89ddff;">-&gt;</span><span style="color:#eeffff;">faker</span><span style="color:#89ddff;">-&gt;</span><span style="color:#9fcdf5;">paragraph</span><span style="color:#89ddff;">(</span><span style="color:#82aaff;font-style:italic;">rand</span><span style="color:#89ddff;">(</span><span style="color:#f78c6c;">5</span><span style="color:#89ddff;">,</span><span style="color:#f78c6c;">20</span><span style="color:#89ddff;">))</span><span style="color:#89ddff;">,</span></span>
<span class="t m" style="left:614.00px;top:685.13px;font-size:21.663px;"><span style="color:#89ddff;">        ];</span></span>
<span class="t m" style="left:614.00px;top:723.93px;font-size:21.663px;"><span style="color:#89ddff;">    }</span></span>
<span class="t m" style="left:614.00px;top:762.73px;font-size:21.663px;"><span style="color:#89ddff;">}</span></span>
<div class="r" style="left:1797.00px;top:130.00px;width:92.00px;height:30.00px;background:#242424;border-radius:3px;"></div>
<svg class="r" style="left:1808.00px;top:138.00px;" width="16" height="15" viewBox="0 0 16 15"><path d="M8 0.8L15.4 14.2H0.6z" fill="#f0b34a"/><path d="M8 5v5" stroke="#212121" stroke-width="1.8"/><circle cx="8" cy="12" r="1" fill="#212121"/></svg>
<span class="t" style="left:1826.00px;top:137.10px;font-size:15.00px;color:#9a9a9a;">1</span>
<svg class="r" style="left:1846.00px;top:141.00px;" width="13" height="9" viewBox="0 0 13 9"><path d="M1.5 7L6.5 2L11.5 7" fill="none" stroke="#c4c4c4" stroke-width="1.8"/></svg>
<svg class="r" style="left:1872.00px;top:142.00px;" width="13" height="9" viewBox="0 0 13 9"><path d="M1.5 2L6.5 7L11.5 2" fill="none" stroke="#c4c4c4" stroke-width="1.8"/></svg>
<div class="r" style="left:1623.00px;top:178.50px;width:199.50px;height:37.50px;background:#282828;border-radius:11px;box-shadow:0 0 5px 1px rgba(40,40,40,0.8);"></div>
<svg class="r" style="left:1630.90px;top:188.80px;" width="18.4" height="18.4" viewBox="-10 -10 20 20"><circle r="9.6" fill="#de4a3c"/><path d="M-8.31 4.8A9.6 9.6 0 0 0 0.6 9.58L4.2 2.4L0 4.85L-4.2 2.42z" fill="#1ea362"/><path d="M-8.31 -4.8L-4.2 2.42L0 4.85L-4.2 2.42L-8.31 4.8A9.6 9.6 0 0 1 -8.31 -4.8z" fill="#1ea362"/><path d="M-8.31 -4.8A9.6 9.6 0 0 0 -8.31 4.8L-4.2 2.42z" fill="#1ea362"/><path d="M9.05 -3.2A9.6 9.6 0 0 1 0.6 9.58L4.2 2.4A4.85 4.85 0 0 0 4.2 -2.42z" fill="#fecd3f"/><circle r="4.5" fill="#f4f4f4"/><circle r="3.5" fill="#4a8bf5"/></svg>
<svg class="r" style="left:1663.60px;top:188.80px;" width="18.4" height="18.4" viewBox="-10 -10 20 20"><defs><linearGradient id="ffg" x1="0.85" y1="0.1" x2="0.15" y2="0.9"><stop offset="0" stop-color="#ffe03a"/><stop offset="0.45" stop-color="#ff8a1e"/><stop offset="1" stop-color="#e6263f"/></linearGradient></defs><path d="M-9 -1C-9.6 5.2 -4.6 9.6 0.4 9.6C5.8 9.6 9.6 5.400 9.600 0.200C9.600 -3.400 7.800 -6.600 5.600 -8.200C6.400 -5.800 5.800 -4.400 5 -3.600C4.400 -6.400 2 -8.200 -0.400 -9.800C-0.800 -7.600 -2.800 -6.400 -3.600 -4.200C-5 -4.400 -6.200 -5.400 -6.600 -6.400C-8 -5 -9 -3 -9 -1z" fill="url(#ffg)"/><circle cx="0.800" cy="1.400" r="4.700" fill="#5a3fd6"/><path d="M-4.600 -0.600C-2.400 -3 1.600 -2.600 3.200 -0.400C1.400 -0.800 0.200 -0.200 -0.400 1C1 2 2.600 1.800 3.600 1.200C3 3.800 -0.600 5.400 -3.400 3.600C-5 2.400 -5.200 0.600 -4.600 -0.600z" fill="#ff9a24"/></svg>
<svg class="r" style="left:1695.80px;top:188.80px;" width="18.4" height="18.4" viewBox="-10 -10 20 20"><circle r="9.600" fill="#e4e9f0"/><circle r="8.500" fill="#3f93f0"/><path d="M5.800 -5.800L1.300 1.300L-1.300 -1.300z" fill="#f4f4f4"/><path d="M-5.800 5.800L-1.300 -1.300L1.300 1.300z" fill="#f0564c"/></svg>
<svg class="r" style="left:1728.70px;top:188.80px;" width="18.4" height="18.4" viewBox="-10 -10 20 20"><ellipse rx="9.200" ry="9.600" fill="#e3162c"/><ellipse rx="3.700" ry="6.900" fill="#282828"/></svg>
<svg class="r" style="left:1760.40px;top:188.40px;" width="19.2" height="19.2" viewBox="-10 -10 20 20"><path d="M-7.200 1.900A7.400 7.400 0 1 1 7.500 1.900H-2.700A3 3 0 0 0 3.100 3.300H7.100A7.500 7.500 0 0 1 -7.200 1.900z M-2.700 -1.300H3A2.900 2.900 0 0 0 -2.700 -1.300z" fill="#25b5f0" fill-rule="evenodd"/><path d="M-8.800 8.200C-11 3 1 -9.500 8.800 -8.400C9.600 -7.600 9 -6 8.200 -5.200" fill="none" stroke="#25b5f0" stroke-width="1.500"/></svg>
<svg class="r" style="left:1793.80px;top:188.80px;" width="18.4" height="18.4" viewBox="-10 -10 20 20"><defs><linearGradient id="edg" x1="0.1" y1="0.9" x2="0.9" y2="0.1"><stop offset="0" stop-color="#0a55b0"/><stop offset="0.5" stop-color="#1c9bd8"/><stop offset="1" stop-color="#52dc7c"/></linearGradient></defs><circle r="9.600" fill="url(#edg)"/><path d="M-9.600 0.600C-8 -3 -4 -4.600 -0.600 -4.200C3 -3.800 5 -1.200 4.200 1.600C3.800 3 2.400 3.600 1.800 3.400C2.800 1 1.800 -1.200 -0.600 -1.200C-3.200 -1.200 -5 1 -4.400 4C-3.800 7 -1 9 2.600 9.200C-3 11 -9.600 7 -9.600 0.600z" fill="#0c59b4"/><path d="M1.800 3.400C4 4.400 7.600 3.600 9.600 0.800C9.400 3.200 8.400 5.200 7.200 6.400C5 7.600 2.400 6.800 1.800 3.400z" fill="#282828"/></svg>
<div class="r" style="left:1876.00px;top:250.00px;width:17.00px;height:3.00px;background:#f0b45a;"></div>
<div class="r" style="left:1876.00px;top:295.00px;width:17.00px;height:2.00px;background:#4a4a4a;"></div>
<div class="r" style="left:1876.00px;top:666.00px;width:17.00px;height:1.60px;background:#555555;"></div>
<div class="r" style="left:1876.00px;top:688.60px;width:17.00px;height:1.60px;background:#555555;"></div>
<div class="r" style="left:1876.00px;top:709.60px;width:17.00px;height:1.60px;background:#555555;"></div>
<div class="r" style="left:1883.70px;top:427.00px;width:8.30px;height:446.00px;background:rgba(160,102,26,0.93);border-radius:4px;"></div>
<div class="r" style="left:520.00px;top:929.20px;width:1375.00px;height:1.00px;background:#363636;"></div>
<span class="t" style="left:616.00px;top:934.80px;font-size:15.00px;color:#4e4e4e;letter-spacing:-0.013px;">\Database\Factories</span>
<svg class="r" style="left:763.00px;top:940.00px;" width="6" height="9" viewBox="0 0 6 9"><path d="M1 1L4.5 4.5L1 8" fill="none" stroke="#383838" stroke-width="1.200"/></svg>
<span class="t" style="left:780.00px;top:934.80px;font-size:15.00px;color:#4e4e4e;letter-spacing:-0.053px;">ArticleFactory</span>
<span class="t" style="left:260.50px;top:964.82px;font-size:13.50px;color:#c4c4c4;letter-spacing:-0.217px;">Terminal</span>
<svg class="r" style="left:1802.00px;top:965.00px;" width="17" height="17" viewBox="0 0 17 17"><circle cx="8.5" cy="8.5" r="8" fill="#4da15a"/></svg>
<span class="t" style="left:1807.50px;top:964.79px;font-size:11.00px;color:#e8f5e8;font-weight:700;">1</span>
<span class="t" style="left:1824.00px;top:964.82px;font-size:13.50px;color:#c4c4c4;letter-spacing:-0.475px;">Event Log</span>
<span class="t" style="left:260.00px;top:997.80px;font-size:15.00px;color:#b4b4b4;letter-spacing:-0.047px;">Plugin with auto configuration now, open Project Settings or dismiss further messages (today 11:14 AM)</span>
<div class="r" style="left:1552.00px;top:993.00px;width:105.00px;height:28.00px;background:#1d1d1d;border-radius:3px;"></div>
<span class="t" style="left:1560.00px;top:999.32px;font-size:13.50px;color:#d8d8d8;letter-spacing:-0.540px;font-weight:700;">Material Darker</span>
<svg class="r" style="left:1660.00px;top:998.00px;" width="20" height="20" viewBox="0 0 20 20"><circle cx="10" cy="10" r="9" fill="#ff9b14"/></svg>
<span class="t" style="left:1689.00px;top:998.15px;font-size:14.00px;color:#b4b4b4;letter-spacing:-0.734px;">9:7</span>
<span class="t" style="left:1722.50px;top:998.36px;font-size:13.40px;color:#b4b4b4;letter-spacing:-1.141px;">LF</span>
<span class="t" style="left:1751.00px;top:998.01px;font-size:14.40px;color:#b4b4b4;letter-spacing:-0.445px;">UTF-8</span>
<span class="t" style="left:1805.00px;top:997.80px;font-size:15.00px;color:#b4b4b4;letter-spacing:-0.578px;">4 spaces</span>
<svg class="r" style="left:1866.00px;top:998.00px;" width="16" height="18" viewBox="0 0 16 18"><path d="M4 0.5h6v8.5a4 4 0 0 0 -2 7.5h-7.5v-12.5z" fill="#b8b8b8"/><circle cx="11.5" cy="13" r="3.4" fill="#b8b8b8"/><circle cx="11.5" cy="13" r="1.3" fill="#212121"/></svg>
<svg class="r" style="left:1896.00px;top:999.00px;" width="16" height="17" viewBox="0 0 16 17"><rect x="1" y="8" width="11" height="8" fill="#d0d0d0"/><path d="M3.5 8V4.5a3.2 3.2 0 0 1 6.4 0" fill="none" stroke="#d0d0d0" stroke-width="1.8" transform="translate(4.5,0)"/></svg>
<div class="r" style="left:3.00px;top:963.50px;width:257.50px;height:62.50px;background:#fa2c20;border-radius:4px;"></div>
<span class="t" style="left:25.50px;top:983.87px;font-size:33.00px;color:#ffffff;letter-spacing:-0.295px;">LaravelLearn.ir</span>
</body></html>
